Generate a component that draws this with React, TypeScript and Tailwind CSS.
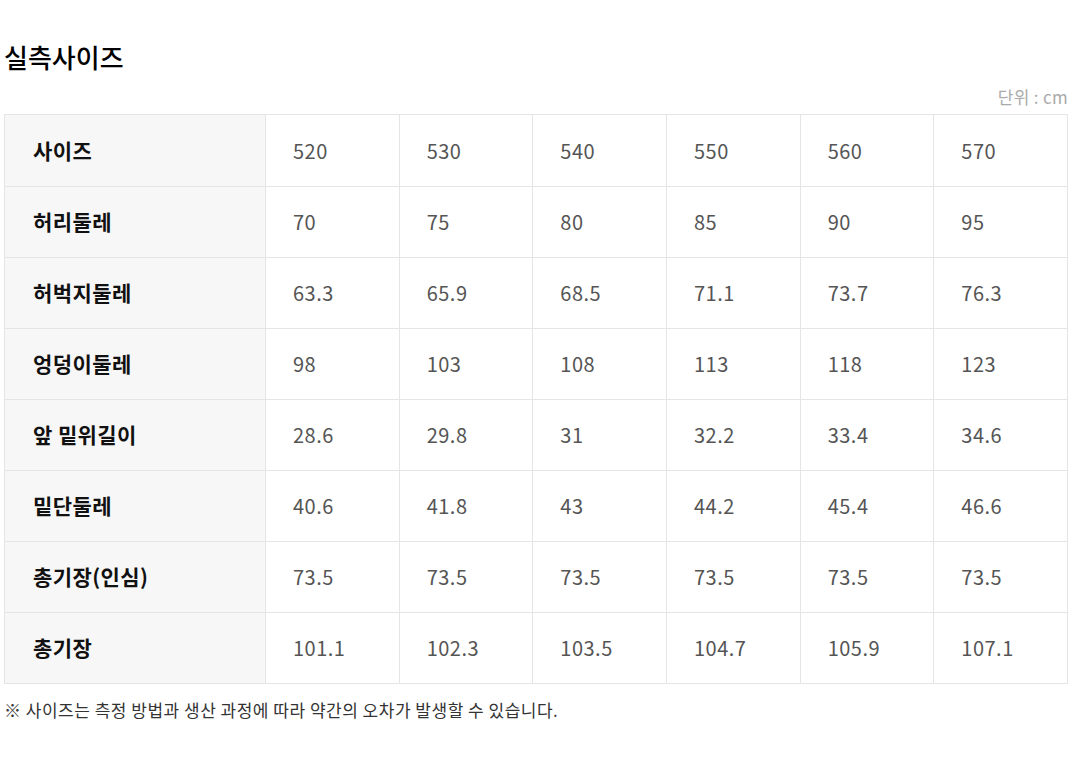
const rows: [string, string[]][] = [
  ['사이즈', ['520', '530', '540', '550', '560', '570']],
  ['허리둘레', ['70', '75', '80', '85', '90', '95']],
  ['허벅지둘레', ['63.3', '65.9', '68.5', '71.1', '73.7', '76.3']],
  ['엉덩이둘레', ['98', '103', '108', '113', '118', '123']],
  ['앞 밑위길이', ['28.6', '29.8', '31', '32.2', '33.4', '34.6']],
  ['밑단둘레', ['40.6', '41.8', '43', '44.2', '45.4', '46.6']],
  ['총기장(인심)', ['73.5', '73.5', '73.5', '73.5', '73.5', '73.5']],
  ['총기장', ['101.1', '102.3', '103.5', '104.7', '105.9', '107.1']],
];

export default function App() {
  return (
    <div className="min-h-[762px] bg-white px-1 pt-[39px] font-['Noto_Sans_CJK_KR',sans-serif]">
      <h2 className="text-[26px] leading-[36px] font-medium text-black">실측사이즈</h2>
      <p className="mt-[10px] text-right text-[17px] leading-[24px] tracking-[0.3px] text-[#aaa]">단위 : cm</p>
      <table className="mt-[5px] w-full table-fixed border-collapse">
        <colgroup>
          <col className="w-[261px]" />
          <col />
          <col />
          <col />
          <col />
          <col />
          <col />
        </colgroup>
        <tbody>
          {rows.map(([label, vals], r) => (
            <tr key={label} className={r === 0 ? 'h-[72px]' : 'h-[71px]'}>
              <th className="border border-[#e5e5e5] bg-[#f7f7f7] pl-[28px] text-left text-[21px] font-bold tracking-[0.4px] text-[#111]">
                {label}
              </th>
              {vals.map((v, i) => (
                <td key={i} className="border border-[#e5e5e5] pl-[27px] text-[20px] tabular-nums tracking-[0.5px] text-[#555]">
                  {v}
                </td>
              ))}
            </tr>
          ))}
        </tbody>
      </table>
      <p className="mt-[15px] text-[17px] leading-[22px] tracking-[0.5px] text-[#333]">※ 사이즈는 측정 방법과 생산 과정에 따라 약간의 오차가 발생할 수 있습니다.</p>
    </div>
  );
}
